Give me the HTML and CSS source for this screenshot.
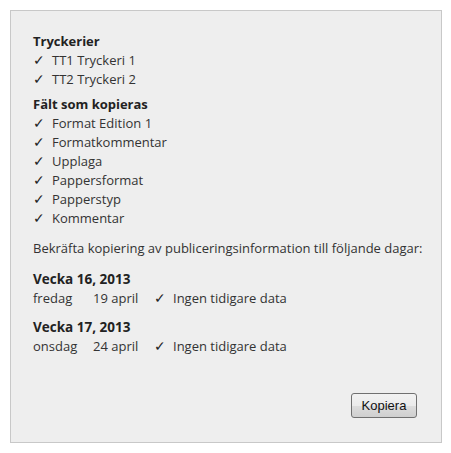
FILE: index.html
```html
<!DOCTYPE html>
<html>
<head>
<meta charset="utf-8">
<link rel="stylesheet" href="styles.css">
</head>
<body>
<div class="panel">
  <div class="section">
    <div class="head">Tryckerier</div>
    <div class="item"><span class="chk">✓</span>TT1 Tryckeri 1</div>
    <div class="item"><span class="chk">✓</span>TT2 Tryckeri 2</div>
  </div>
  <div class="section">
    <div class="head">Fält som kopieras</div>
    <div class="item"><span class="chk">✓</span>Format Edition 1</div>
    <div class="item"><span class="chk">✓</span>Formatkommentar</div>
    <div class="item"><span class="chk">✓</span>Upplaga</div>
    <div class="item"><span class="chk">✓</span>Pappersformat</div>
    <div class="item"><span class="chk">✓</span>Papperstyp</div>
    <div class="item"><span class="chk">✓</span>Kommentar</div>
  </div>
  <p class="confirm">Bekräfta kopiering av publiceringsinformation till följande dagar:</p>
  <div class="week">
    <div class="whead">Vecka 16, 2013</div>
    <div class="day"><span class="dname">fredag</span><span class="ddate">19 april</span><span class="chk">✓</span>Ingen tidigare data</div>
  </div>
  <div class="week">
    <div class="whead">Vecka 17, 2013</div>
    <div class="day"><span class="dname">onsdag</span><span class="ddate">24 april</span><span class="chk">✓</span>Ingen tidigare data</div>
  </div>
  <div class="actions"><button class="btn">Kopiera</button></div>
</div>
</body>
</html>
```

FILE: styles.css
```css
html, body { margin: 0; padding: 0; background: #fff; }
body { padding: 10px; font-family: "Open Sans", "Noto Sans", sans-serif; font-size: 13px; color: #333; }
.panel {
  width: 408px; height: 410px; padding: 21px 0 0 22px;
  border: 1px solid #c8c8c8; background: #eeeeee;
}
.section { margin-bottom: 6px; }
.head { font-weight: bold; line-height: 19px; font-size: 13px; color: #222; height: 19px; }
.item { line-height: 19px; height: 19px; }
.chk { display: inline-block; width: 19px; color: #222; font-size: 14px; line-height: 0; }
.confirm { margin: 11px 0 12px; line-height: 19px; }
.week { margin-bottom: 10px; }
.whead { font-weight: bold; font-size: 13.5px; line-height: 19px; color: #222; height: 19px; }
.day { line-height: 19px; height: 19px; }
.dname { display: inline-block; width: 60px; }
.ddate { display: inline-block; width: 61px; }
.actions { display: flex; justify-content: flex-end; margin-top: 37px; padding-right: 24px; }
.btn {
  font-family: "Liberation Sans", Arial, sans-serif; font-size: 13px; color: #111;
  width: 66px; height: 25px; border: 1px solid #707070; border-radius: 3px;
  background: linear-gradient(#f2f2f2 0%, #ebebeb 50%, #dddddd 51%, #cfcfcf 100%);
  padding: 0;
}
```
